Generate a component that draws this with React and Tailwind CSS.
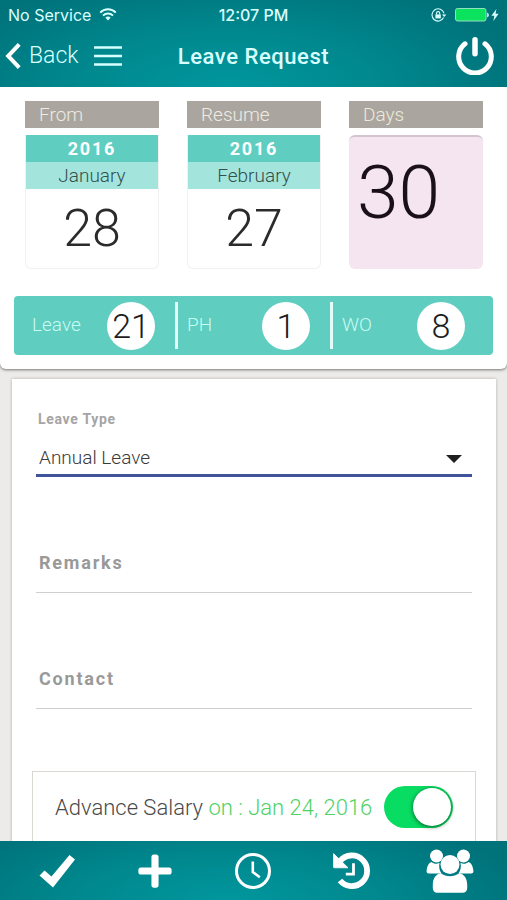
import React, { useState } from 'react';
import { FaPlus } from 'react-icons/fa';

const WifiIcon = () => (
  <svg viewBox="0 0 18 13" className="w-[18px] h-[13px]" fill="none" stroke="currentColor" strokeWidth="2">
    <path d="M1.2 4.6a11 11 0 0 1 15.6 0" />
    <path d="M4 7.6a7 7 0 0 1 10 0" />
    <path d="M9 12.6l-2.6-2.8a3.8 3.8 0 0 1 5.2 0z" fill="currentColor" stroke="none" />
  </svg>
);

const RotationLockIcon = () => (
  <svg viewBox="0 0 16 14" className="w-4 h-3.5" fill="none" stroke="currentColor" strokeWidth="1.1">
    <path d="M13 5.4A6.1 6.1 0 1 0 12.6 9.6" />
    <path d="M11 6.4h4.4L13.2 9z" fill="currentColor" stroke="none" />
    <rect x="4.4" y="6.4" width="5.4" height="4" fill="currentColor" stroke="none" />
    <path d="M5.5 6.6V5.2a1.6 1.6 0 0 1 3.2 0v1.4" />
  </svg>
);

const BatteryIcon = () => (
  <svg viewBox="0 0 36 14" className="w-9 h-3.5">
    <rect x="0.5" y="0.5" width="30.5" height="12.5" rx="2" fill="#0be35f" stroke="#8fe0c0" />
    <path d="M32.2 4.5v5c1-.4 1.6-1.4 1.6-2.5s-.6-2.1-1.6-2.5z" fill="#d8ffff" />
  </svg>
);

const BoltIcon = () => (
  <svg viewBox="0 0 8 12" className="w-2 h-3" fill="currentColor">
    <path d="M5.4 0L0.4 6.8h2.9L2.4 12l5.2-7.2H4.6z" />
  </svg>
);

const BackIcon = () => (
  <svg viewBox="0 0 16 26" className="w-4 h-[26px]" fill="none" stroke="currentColor" strokeWidth="4">
    <path d="M14.2 1.4L3.2 13l11 11.6" />
  </svg>
);

const MenuIcon = () => (
  <svg viewBox="0 0 28 20" className="w-7 h-5" stroke="currentColor" strokeWidth="2.6">
    <path d="M0 1.5h28M0 10h28M0 18.5h28" />
  </svg>
);

const PowerIcon = () => (
  <svg viewBox="0 0 38 38" className="w-[38px] h-[38px]" fill="none" stroke="currentColor" strokeWidth="5" strokeLinecap="round">
    <path d="M9 6.8a16.3 16.3 0 1 0 20 0" />
    <path d="M19 2.8v14" strokeWidth="5.5" />
  </svg>
);

const CheckIcon = () => (
  <svg viewBox="0 0 36 34" className="w-9 h-[34px]" fill="currentColor">
    <path d="M30.5 1L36 5.5 14 33.5 0.5 21.5 5.5 16.5 12.5 22.5z" />
  </svg>
);

const ClockIcon = () => (
  <svg viewBox="0 0 36 36" className="w-9 h-9" fill="none" stroke="currentColor">
    <circle cx="18" cy="18" r="16.5" strokeWidth="3" />
    <path d="M17.8 8.5v10.5l7 5.2" strokeWidth="2.6" />
  </svg>
);

const HistoryIcon = () => (
  <svg viewBox="0 0 38 38" className="w-[38px] h-[38px]" fill="none" stroke="currentColor">
    <path d="M7.2 8.8A15.3 15.3 0 1 1 7 28.5" strokeWidth="5.8" />
    <path d="M0.6 1.6L15 15.8H1.4a1 1 0 0 1-1-1z" fill="currentColor" strokeWidth="0.8" strokeLinejoin="round" />
    <path d="M20.5 11.2v11H12.8" strokeWidth="2.8" />
  </svg>
);

const PeopleIcon = () => (
  <svg viewBox="0 0 48 44" className="w-12 h-11" fill="currentColor">
    <circle cx="10.5" cy="7" r="6.5" />
    <circle cx="37.5" cy="7" r="6.5" />
    <path d="M5.5 13c2.500 2.200 6 2.200 8 .8-.8 4.200-.2 7.600 2 10.700H3c-1.800 0-2.600-1-2.400-2.800C1 17.600 2.800 13.800 5.500 13z" />
    <path d="M42.500 13c-2.500 2.200-6 2.200-8 .8.800 4.200.2 7.600-2 10.700H45c1.800 0 2.600-1 2.400-2.800-.4-4.100-2.200-7.900-4.900-8.700z" />
    <circle cx="24" cy="15.5" r="9.5" />
    <path d="M14.800 24.200c5.600 4 12.800 4 18.400 0 5.200.8 8 5.400 8 11.800v3c0 3-1.800 4.800-4.600 4.800H11.400c-2.800 0-4.600-1.800-4.600-4.800v-3c0-6.400 2.800-11 8-11.800z" />
  </svg>
);

const DateCard = ({ title, year, month, day }) => (
  <div className="flex-1">
    <div className="h-[27px] leading-[27px] pl-3.5 bg-[#aaa69f] text-[#efebe4] text-[19px] font-light">{title}</div>
    <div className="mt-[7px] h-[134px] rounded-b-md border border-t-0 border-[#f1f1f1] text-center">
      <div className="h-[27px] leading-[27px] bg-[#5fcdbf] text-white text-lg font-bold tracking-widest">{year}</div>
      <div className="h-[27px] leading-[27px] bg-[#a3e5dc] text-[#34504d] text-[19px] font-light">{month}</div>
      <div className="h-20 leading-[80px] text-[#2b2b2b] text-[52px] font-light">{day}</div>
    </div>
  </div>
);

const counts = [
  { label: 'Leave', value: 21 },
  { label: 'PH', value: 1 },
  { label: 'WO', value: 8 },
];

const App = () => {
  const [advance, setAdvance] = useState(true);

  return (
    <div className="h-screen flex flex-col bg-[#edebe9] overflow-hidden font-['Roboto',sans-serif]">
      {/* Status bar + navigation */}
      <header className="shrink-0 h-[87px] bg-[radial-gradient(ellipse_60%_130%_at_45%_100%,#00979d_0%,#00888e_50%,#00727a_100%)] text-[#d8ffff]">
        <div className="h-[29px] grid grid-cols-3 items-center px-2 font-['Inter',sans-serif] text-base">
          <div className="flex items-center gap-2 whitespace-nowrap">
            No Service
            <WifiIcon />
          </div>
          <div className="text-center font-medium">12:07 PM</div>
          <div className="flex items-center justify-end">
            <RotationLockIcon />
            <span className="ml-2 flex items-center">
              <BatteryIcon />
              <BoltIcon />
            </span>
          </div>
        </div>
        <nav className="h-[54px] grid grid-cols-[1fr_auto_1fr] items-center px-[5px]">
          <div className="flex items-center gap-[15px]">
            <button className="flex items-center gap-2 text-[23px] font-light">
              <span className="text-white"><BackIcon /></span>
              Back
            </button>
            <button aria-label="Menu">
              <MenuIcon />
            </button>
          </div>
          <h1 className="text-[22px] font-medium tracking-wide">Leave Request</h1>
          <button className="justify-self-end mr-2 text-white" aria-label="Log out">
            <PowerIcon />
          </button>
        </nav>
      </header>

      <main className="flex-1 min-h-0 overflow-hidden">
        {/* Dates */}
        <section className="bg-white rounded-b-md shadow-[0_1px_3px_rgba(0,0,0,0.5)] py-3.5 px-3.5">
          <div className="flex gap-7 pl-[11px] pr-2.5">
            <DateCard title="From" year="2016" month="January" day="28" />
            <DateCard title="Resume" year="2016" month="February" day="27" />
            <div className="flex-1">
              <div className="h-[27px] leading-[27px] pl-3.5 bg-[#aaa69f] text-[#efe9da] text-[19px] font-light">Days</div>
              <div className="mt-[7px] h-[134px] rounded-md bg-[#f5e5f1] border-t-2 border-[#d3c4cf] pl-2 text-[#1a1019] text-[75px] leading-[110px] font-light">
                30
              </div>
            </div>
          </div>

          <div className="mt-[27px] h-[59px] flex items-center rounded bg-[#5fcdbf] pl-1.5 pr-2">
            {counts.map((item, i) => (
              <div
                key={item.label}
                className={`flex-1 h-[47px] flex items-center justify-between pr-5 ${i > 0 ? 'border-l-3 border-[#e4fbf8] pl-[9px]' : 'pl-3'}`}
              >
                <span className="text-[#c9fbf3] text-[19px] font-light">{item.label}</span>
                <span className="w-12 h-12 rounded-full bg-white text-[#1d1d1d] text-[34px] leading-[48px] font-light text-center">
                  {item.value}
                </span>
              </div>
            ))}
          </div>
        </section>

        {/* Form */}
        <form className="mt-2.5 ml-3 mr-[11px] pt-7 px-5 bg-white shadow-[0_0_3px_rgba(0,0,0,0.25)]">
          <div className="ml-1 mr-1">
            <label htmlFor="leaveType" className="block pl-0.5 text-sm leading-6 font-bold tracking-wider text-[#a5a5a5]">
              Leave Type
            </label>
            <div className="relative mt-2 border-b-3 border-[#40549b]">
              <select
                id="leaveType"
                className="block w-full h-[35px] pt-1 pl-[3px] appearance-none bg-transparent text-[19px] font-light text-[#3a3a3a] outline-none"
              >
                <option>Annual Leave</option>
                <option>Sick Leave</option>
              </select>
              <svg viewBox="0 0 16 8" className="absolute right-2.5 top-4 w-4 h-2 pointer-events-none" fill="#1f1f1f">
                <path d="M0 0h16L8 8z" />
              </svg>
            </div>
            <input
              type="text"
              aria-label="Remarks"
              placeholder="Remarks"
              className="block w-full mt-14 h-[60px] pl-[3px] border-b border-[#cfcfcf] text-lg font-bold tracking-widest placeholder:text-[#999999] outline-none"
            />
            <input
              type="text"
              aria-label="Contact"
              placeholder="Contact"
              className="block w-full mt-14 h-[60px] pl-[3px] border-b border-[#cfcfcf] text-lg font-bold tracking-widest placeholder:text-[#999999] outline-none"
            />
          </div>

          <label className="mt-[62px] h-[90px] pt-3.5 px-[22px] flex items-start justify-between border border-[#dad7d3] text-[22px] leading-[44px] font-light text-[#4a4a4a] whitespace-nowrap">
            <span>
              Advance Salary <span className="text-[#4fd266]">on : Jan 24, 2016</span>
            </span>
            <input
              type="checkbox"
              checked={advance}
              onChange={() => setAdvance(!advance)}
              className="appearance-none shrink-0 w-[69px] h-[42px] p-0.5 rounded-full bg-gray-300 checked:bg-[#08dc62] flex checked:justify-end before:block before:w-[38px] before:h-[38px] before:rounded-full before:bg-white before:shadow-[0_1px_4px_rgba(0,0,0,0.6)]"
            />
          </label>
        </form>
      </main>

      {/* Bottom bar */}
      <footer className="relative shrink-0 h-[59px] grid grid-cols-5 items-center justify-items-center px-2 text-white bg-[radial-gradient(ellipse_60%_150%_at_45%_100%,#00979d_0%,#00888e_50%,#00727a_100%)]">
        <button aria-label="Approve"><CheckIcon /></button>
        <button aria-label="Add"><FaPlus className="w-[38px] h-[38px]" /></button>
        <button aria-label="Pending"><ClockIcon /></button>
        <button aria-label="History"><HistoryIcon /></button>
        <button aria-label="Team"><PeopleIcon /></button>
      </footer>
    </div>
  );
};

export default App;
